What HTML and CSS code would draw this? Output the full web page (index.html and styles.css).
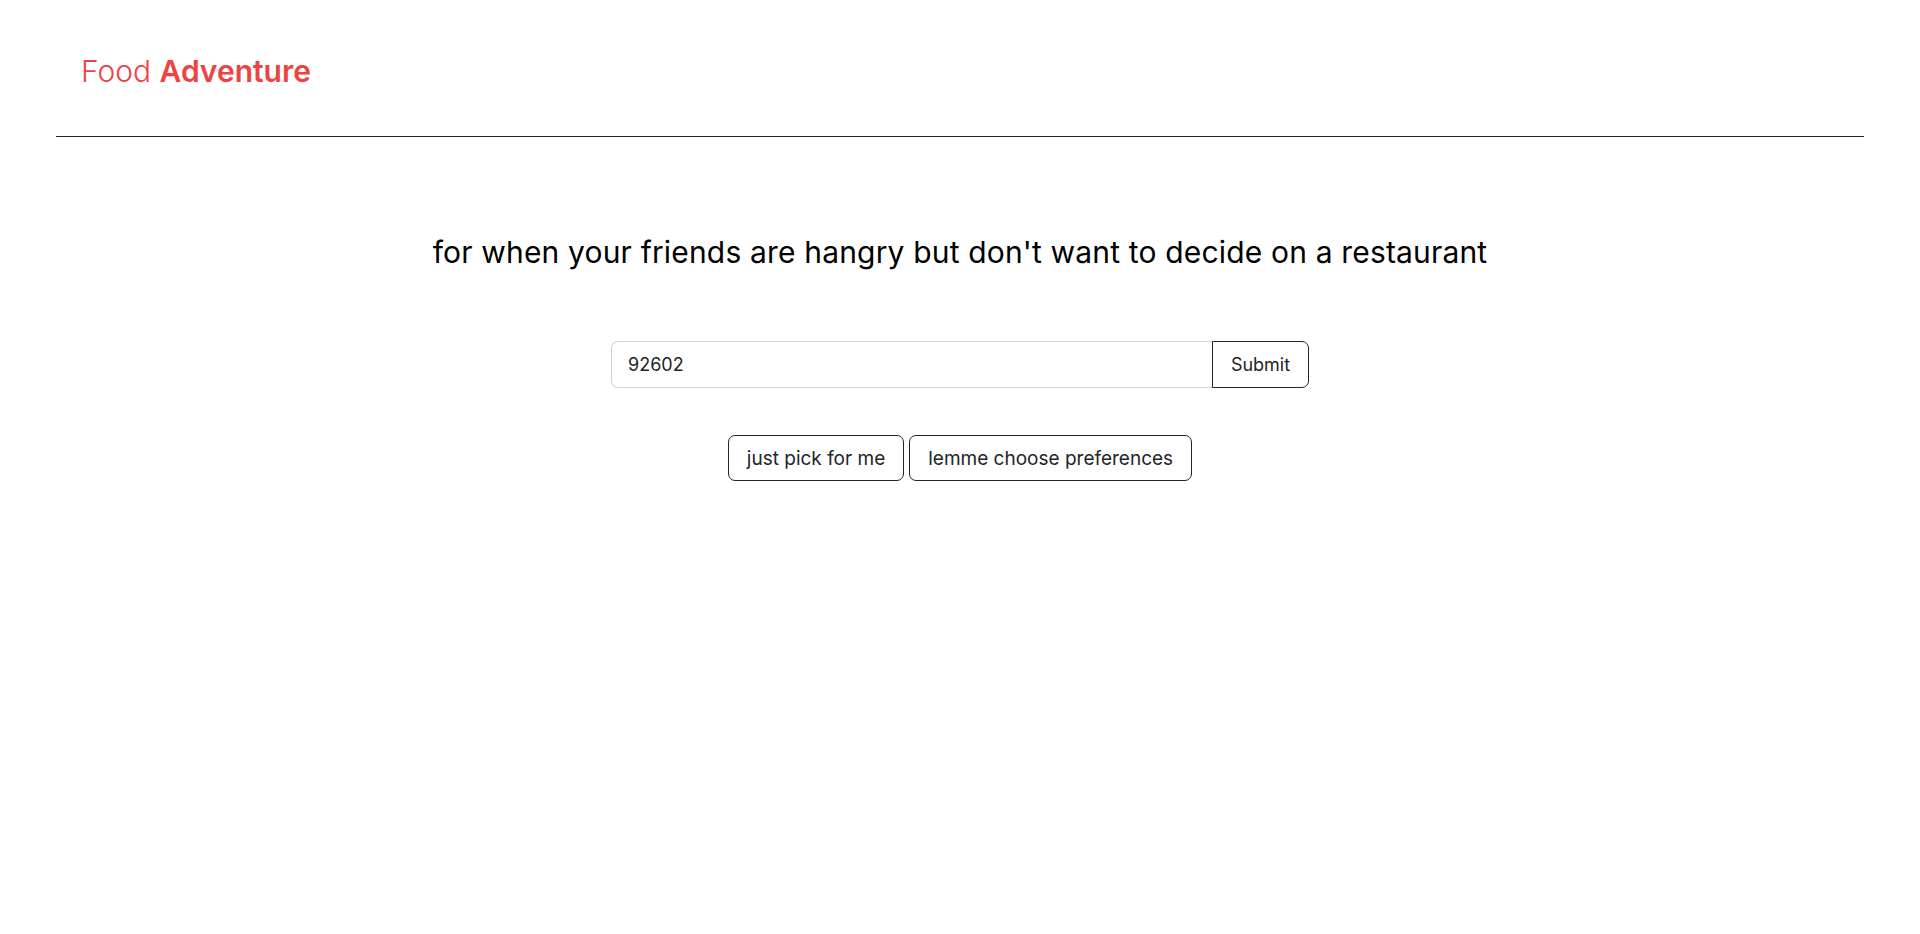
FILE: index.html
```html
<!DOCTYPE html>
<html lang="en">
<head>
<meta charset="utf-8">
<title>Food Adventure</title>
<link rel="stylesheet" href="styles.css">
</head>
<body>
<div class="page">
  <header class="header">
    <a class="logo" href="#"><span class="logo-light">Food</span> <span class="logo-bold">Adventure</span></a>
  </header>
  <hr class="divider">
  <main class="main">
    <h3 class="tagline">for when your friends are hangry but don't want to decide on a restaurant</h3>
    <form class="zip-form">
      <input class="zip-input" type="text" value="92602">
      <button class="zip-submit" type="button">Submit</button>
    </form>
    <div class="choices">
      <button class="choice" type="button">just pick for me</button>
      <button class="choice" type="button">lemme choose preferences</button>
    </div>
  </main>
</div>
</body>
</html>
```
FILE: styles.css
```css
* { box-sizing: border-box; }
html, body { margin: 0; padding: 0; background: #fff; }
body {
  font-family: Inter, "Noto Sans", "Liberation Sans", sans-serif;
  color: #212529;
}
.page { padding: 0 56px; }
.header { padding: 51px 25px 0; height: 136px; }
.logo {
  text-decoration: none;
  color: #ef4343;
  font-size: 30px;
  line-height: 40px;
}
.logo-light { font-weight: 300; }
.logo-bold { font-weight: 600; }
.divider {
  margin: 0;
  border: 0;
  border-top: 1px solid #212529;
}
.main {
  display: flex;
  flex-direction: column;
  align-items: center;
}
.tagline {
  margin: 97px 0 0;
  font-size: 30px;
  font-weight: 400;
  line-height: 36px;
  letter-spacing: 0.17px;
  color: #000;
}
.zip-form {
  display: flex;
  margin-top: 71px;
  width: 698px;
}
.zip-input {
  flex: 1;
  height: 47px;
  padding: 0 16px;
  font: inherit;
  font-size: 18px;
  color: #212529;
  border: 1px solid #ced4da;
  border-right: 0;
  border-radius: 7px 0 0 7px;
  outline: none;
}
.zip-submit {
  width: 97px;
  height: 47px;
  font: inherit;
  font-size: 18px;
  color: #212529;
  background: #fff;
  border: 1px solid #212529;
  border-radius: 0 7px 7px 0;
}
.choices {
  display: flex;
  gap: 5px;
  margin-top: 47px;
}
.choice {
  height: 46px;
  padding: 0 18px;
  font: inherit;
  font-size: 19px;
  color: #212529;
  background: #fff;
  border: 1px solid #212529;
  border-radius: 7px;
}
```
